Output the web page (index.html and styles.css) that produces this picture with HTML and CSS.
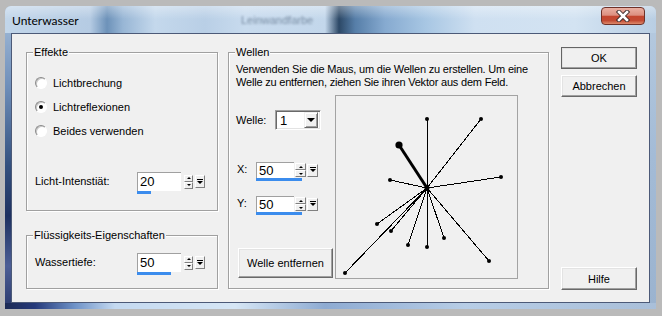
FILE: index.html
```html
<!DOCTYPE html>
<html lang="de">
<head>
    <meta charset="UTF-8">
    <title>Unterwasser</title>
    <link rel="stylesheet" href="styles.css">
</head>
<body>
    <div class="window">
        <div class="titlebar">
            <span class="title">Unterwasser</span>
            <span class="glass-text">Leinwandfarbe</span>
            <button class="close">
                <svg width="16" height="12" viewBox="0 0 16 12">
                    <path d="M4 2 L12 10 M12 2 L4 10" stroke="#3a2a2a" stroke-width="4.4" stroke-linecap="square"/>
                    <path d="M4 2 L12 10 M12 2 L4 10" stroke="#fff" stroke-width="2.6" stroke-linecap="square"/>
                </svg>
            </button>
        </div>

        <div class="client">
            <div class="left-col">
                <div class="group group-effects">
                    <span class="legend">Effekte</span>
                    <div class="radio-row"><span class="radio"></span>Lichtbrechung</div>
                    <div class="radio-row"><span class="radio checked"></span>Lichtreflexionen</div>
                    <div class="radio-row"><span class="radio"></span>Beides verwenden</div>
                    <div class="field-row intensity">
                        <span class="field-label">Licht-Intenstiät:</span>
                        <div class="spin">
                            <div class="spin-row">
                                <div class="spin-edit">20</div>
                                <div class="spin-arrows">
                                    <span class="arrow-btn"><i class="tri-up"></i></span>
                                    <span class="arrow-btn"><i class="tri-down"></i></span>
                                </div>
                                <div class="spin-drop">
                                    <svg width="6" height="6" viewBox="0 0 6 6"><rect x="0" y="0" width="6" height="1" fill="#000"/><path d="M0 2 H6 L3 5 Z" fill="#000"/></svg>
                                </div>
                            </div>
                            <div class="spin-bar" style="width:14px"></div>
                        </div>
                    </div>
                </div>

                <div class="group group-fluid">
                    <span class="legend">Flüssigkeits-Eigenschaften</span>
                    <div class="field-row">
                        <span class="field-label">Wassertiefe:</span>
                        <div class="spin">
                            <div class="spin-row">
                                <div class="spin-edit">50</div>
                                <div class="spin-arrows">
                                    <span class="arrow-btn"><i class="tri-up"></i></span>
                                    <span class="arrow-btn"><i class="tri-down"></i></span>
                                </div>
                                <div class="spin-drop">
                                    <svg width="6" height="6" viewBox="0 0 6 6"><rect x="0" y="0" width="6" height="1" fill="#000"/><path d="M0 2 H6 L3 5 Z" fill="#000"/></svg>
                                </div>
                            </div>
                            <div class="spin-bar" style="width:34px"></div>
                        </div>
                    </div>
                </div>
            </div>

            <div class="group group-waves">
                <span class="legend">Wellen</span>
                <p class="hint">Verwenden Sie die Maus, um die Wellen zu erstellen. Um eine<br>Welle zu entfernen, ziehen Sie ihren Vektor aus dem Feld.</p>
                <div class="wave-body">
                    <div class="wave-controls">
                        <div class="wave-row">
                            <span class="wave-label">Welle:</span>
                            <div class="combo">
                                <span class="combo-value">1</span>
                                <span class="combo-btn"><i class="tri-combo"></i></span>
                            </div>
                        </div>
                        <div class="xy-row first">
                            <span class="xy-label">X:</span>
                            <div class="spin spin-small">
                                <div class="spin-row">
                                    <div class="spin-edit">50</div>
                                    <div class="spin-arrows">
                                        <span class="arrow-btn"><i class="tri-up"></i></span>
                                        <span class="arrow-btn"><i class="tri-down"></i></span>
                                    </div>
                                    <div class="spin-drop">
                                        <svg width="6" height="6" viewBox="0 0 6 6"><rect x="0" y="0" width="6" height="1" fill="#000"/><path d="M0 2 H6 L3 5 Z" fill="#000"/></svg>
                                    </div>
                                </div>
                                <div class="spin-bar" style="width:46px"></div>
                            </div>
                        </div>
                        <div class="xy-row">
                            <span class="xy-label">Y:</span>
                            <div class="spin spin-small">
                                <div class="spin-row">
                                    <div class="spin-edit">50</div>
                                    <div class="spin-arrows">
                                        <span class="arrow-btn"><i class="tri-up"></i></span>
                                        <span class="arrow-btn"><i class="tri-down"></i></span>
                                    </div>
                                    <div class="spin-drop">
                                        <svg width="6" height="6" viewBox="0 0 6 6"><rect x="0" y="0" width="6" height="1" fill="#000"/><path d="M0 2 H6 L3 5 Z" fill="#000"/></svg>
                                    </div>
                                </div>
                                <div class="spin-bar" style="width:46px"></div>
                            </div>
                        </div>
                        <button class="btn btn-remove">Welle entfernen</button>
                    </div>

                    <div class="wave-canvas">
                        <svg width="181" height="182" viewBox="0 0 181 182">
                            <g stroke="#000" stroke-width="1" shape-rendering="crispEdges">
                                <line x1="91" y1="92" x2="91" y2="23"/>
                                <line x1="91" y1="92" x2="145" y2="23"/>
                                <line x1="91" y1="92" x2="54" y2="84"/>
                                <line x1="91" y1="92" x2="165" y2="81"/>
                                <line x1="91" y1="92" x2="41" y2="128"/>
                                <line x1="91" y1="92" x2="55" y2="135"/>
                                <line x1="91" y1="92" x2="72" y2="149"/>
                                <line x1="91" y1="92" x2="91" y2="151"/>
                                <line x1="91" y1="92" x2="108" y2="142"/>
                                <line x1="91" y1="92" x2="153" y2="165"/>
                                <line x1="91" y1="92" x2="9" y2="177"/>
                            </g>
                            <line x1="91" y1="92" x2="63" y2="49" stroke="#000" stroke-width="3"/>
                            <g fill="#000">
                                <circle cx="91" cy="92" r="2.5"/>
                                <circle cx="63" cy="49" r="3.6"/>
                                <circle cx="91" cy="23" r="2"/>
                                <circle cx="145" cy="23" r="2"/>
                                <circle cx="54" cy="84" r="2"/>
                                <circle cx="165" cy="81" r="2"/>
                                <circle cx="41" cy="128" r="2"/>
                                <circle cx="55" cy="135" r="2"/>
                                <circle cx="72" cy="149" r="2"/>
                                <circle cx="91" cy="151" r="2"/>
                                <circle cx="108" cy="142" r="2"/>
                                <circle cx="153" cy="165" r="2"/>
                                <circle cx="9" cy="177" r="2"/>
                            </g>
                        </svg>
                    </div>
                </div>
            </div>

            <div class="button-col">
                <button class="btn btn-default">OK</button>
                <button class="btn btn-cancel">Abbrechen</button>
                <button class="btn btn-help">Hilfe</button>
            </div>
        </div>
    </div>
</body>
</html>
```

FILE: styles.css
```css
body {
    margin: 0;
    background: #bababa;
    font-family: "Liberation Sans", Arial, sans-serif;
    font-size: 11px;
    color: #000;
}
.window {
    margin: 6px 0 0 5px;
    width: 651px;
    height: 303px;
    box-sizing: border-box;
    padding: 0 6px 6px 6px;
    display: flex;
    flex-direction: column;
    border-radius: 6px 6px 0 0;
    background:
        linear-gradient(to right, #1d2b55 0, #25397a 30px, #6f93c8 70px, #c4d9f0 110px, #d6e6f5 230px, #8eabd2 320px, #b7cde6 460px, #a9bfd9 651px) bottom / 100% 6px no-repeat,
        linear-gradient(to bottom, #a9c1dc 0, #6f8fba 80px, #33507e 160px, #1e3160 210px, #4d5f96 260px, #2a396c 303px) left / 6px 100% no-repeat,
        linear-gradient(to bottom, #b7cbe0 0, #a3bbd6 150px, #9bb3cf 303px) right / 6px 100% no-repeat;
}
.titlebar {
    position: relative;
    height: 27px;
    margin: 0 -6px;
    padding: 0 11px 0 7px;
    display: flex;
    align-items: center;
    border-radius: 6px 6px 0 0;
    background:
        linear-gradient(to bottom, rgba(255, 255, 255, 0.35), rgba(255, 255, 255, 0) 13px),
        linear-gradient(to right, #c2d6ea 0, #b5cbe3 85px, #6d92b9 102px, #98b6d5 118px, #c4d8ec 150px, #b9cfe6 200px, #c8dbee 240px, #c3d7eb 320px, #2c4866 334px, #567ea8 350px, #86aad0 380px, #a7c6e3 420px, #cfe0f1 470px, #d3e3f2 570px, #b9cee3 651px);
}
.title {
    font-family: Lato, "Liberation Sans", sans-serif;
    font-size: 12px;
    margin-top: 1px;
}
.glass-text {
    position: absolute;
    left: 236px;
    top: 8px;
    color: #7a8ea4;
    font-size: 11px;
    filter: blur(1px);
}
.close {
    margin-left: auto;
    align-self: flex-start;
    margin-top: 1px;
    width: 44px;
    height: 18px;
    padding: 0;
    border: 1px solid #6e3128;
    border-radius: 4px;
    background: linear-gradient(to bottom, #eab0a2 0, #dc8f80 45%, #c4462f 52%, #c24a33 78%, #de8a6b 100%);
    display: flex;
    align-items: center;
    justify-content: center;
}
.client {
    flex: 1;
    display: flex;
    align-items: flex-start;
    padding: 13px 0 0 14px;
    background: #f0f0f0;
    border: 1px solid #4c5a78;
}
.left-col {
    width: 192px;
    margin-top: 5px;
}
.group {
    position: relative;
    box-sizing: border-box;
    border: 1px solid #a0a0a0;
    box-shadow: inset 1px 1px #fff, 1px 1px #fff;
}
.legend {
    position: absolute;
    top: -8px;
    left: 6px;
    padding: 0 1px;
    line-height: 14px;
    background: #f0f0f0;
}
.group-effects {
    height: 159px;
    padding: 18px 0 0 8px;
}
.group-fluid {
    height: 54px;
    margin-top: 24px;
    padding: 17px 0 0 8px;
}
.radio-row {
    height: 24px;
    display: flex;
    align-items: center;
}
.radio {
    width: 12px;
    height: 12px;
    box-sizing: border-box;
    margin-right: 6px;
    border-radius: 50%;
    border: 1px solid;
    border-color: #8a8a8a #fff #fff #8a8a8a;
    box-shadow: inset 1px 1px #c8c8c8;
    background: #fff;
    position: relative;
}
.radio.checked::after {
    content: "";
    position: absolute;
    left: 3px;
    top: 3px;
    width: 4px;
    height: 4px;
    border-radius: 50%;
    background: #000;
}
.field-row {
    display: flex;
    align-items: flex-start;
}
.intensity {
    margin-top: 29px;
}
.field-label {
    width: 102px;
    line-height: 19px;
}

/* spin controls */
.spin {
    display: flex;
    flex-direction: column;
}
.spin-row {
    display: flex;
    align-items: center;
    height: 19px;
}
.spin-edit {
    width: 44px;
    height: 19px;
    box-sizing: border-box;
    padding-left: 2px;
    background: #fff;
    border-top: 1px solid #a0a0a0;
    border-left: 1px solid #a0a0a0;
    font-size: 13px;
    line-height: 18px;
}
.spin-arrows {
    width: 9px;
    margin-left: 3px;
    display: flex;
    flex-direction: column;
}
.arrow-btn {
    height: 7px;
    box-sizing: border-box;
    border: 1px solid;
    border-color: #fff #808080 #808080 #fff;
    background: #f0f0f0;
    display: flex;
    align-items: center;
    justify-content: center;
}
.tri-up {
    border-left: 2px solid transparent;
    border-right: 2px solid transparent;
    border-bottom: 2px solid #000;
}
.tri-down {
    border-left: 2px solid transparent;
    border-right: 2px solid transparent;
    border-top: 2px solid #000;
}
.spin-drop {
    width: 10px;
    height: 13px;
    margin-left: 2px;
    box-sizing: border-box;
    border: 1px solid;
    border-color: #fff #808080 #808080 #fff;
    background: #f0f0f0;
    display: flex;
    align-items: center;
    justify-content: center;
}
.spin-bar {
    height: 3px;
    background: #3b8ced;
}
.spin-small .spin-row {
    height: 16px;
}
.spin-small .spin-edit {
    width: 38px;
    height: 16px;
    line-height: 15px;
}
.spin-small .spin-arrows {
    width: 11px;
    margin-left: 1px;
}
.spin-small .spin-drop {
    width: 11px;
    height: 13px;
    margin-left: 1px;
}

/* waves */
.group-waves {
    width: 321px;
    height: 237px;
    margin: 5px 0 0 10px;
    padding: 10px 0 0 7px;
}
.hint {
    margin: 0;
    line-height: 13px;
    letter-spacing: -0.2px;
    white-space: nowrap;
}
.wave-body {
    display: flex;
    margin-top: 6px;
}
.wave-controls {
    width: 99px;
}
.wave-row {
    display: flex;
    align-items: center;
    margin-top: 15px;
    height: 20px;
}
.wave-label {
    width: 39px;
}
.combo {
    width: 46px;
    height: 20px;
    box-sizing: border-box;
    display: flex;
    align-items: center;
    border: 1px solid;
    border-color: #a0a0a0 #fff #fff #a0a0a0;
    box-shadow: inset 1px 1px #696969, inset -1px -1px #e3e3e3;
    background: #fff;
}
.combo-value {
    padding-left: 4px;
    font-size: 13px;
}
.combo-btn {
    margin: 0 2px 0 auto;
    width: 14px;
    height: 16px;
    box-sizing: border-box;
    border: 1px solid;
    border-color: #f0f0f0 #696969 #696969 #f0f0f0;
    box-shadow: inset 1px 1px #fff, inset -1px -1px #a0a0a0;
    background: #f0f0f0;
    display: flex;
    align-items: center;
    justify-content: center;
}
.tri-combo {
    border-left: 4px solid transparent;
    border-right: 4px solid transparent;
    border-top: 4px solid #000;
}
.xy-row {
    display: flex;
    align-items: flex-start;
    margin-top: 15px;
}
.xy-row.first {
    margin-top: 32px;
}
.xy-label {
    width: 20px;
    line-height: 14px;
    padding-left: 1px;
    box-sizing: border-box;
}
.wave-canvas {
    width: 183px;
    height: 184px;
    box-sizing: border-box;
    border: 1px solid #a3a3a3;
    background: #f0f0f0;
}
.wave-canvas svg {
    display: block;
}

/* buttons */
.btn {
    font-family: inherit;
    font-size: 11px;
    color: #000;
    padding: 0;
    background: #f0f0f0;
    border: 1px solid;
    border-color: #fff #696969 #696969 #fff;
    box-shadow: inset -1px -1px #a0a0a0, inset 1px 1px #e3e3e3;
}
.btn-remove {
    width: 95px;
    height: 30px;
    margin: 33px 0 0 2px;
}
.button-col {
    width: 76px;
    height: 243px;
    margin-left: 12px;
    display: flex;
    flex-direction: column;
}
.btn-default,
.btn-cancel {
    height: 22px;
}
.btn-default {
    outline: 1px solid #646464;
    outline-offset: -1px;
}
.btn-cancel {
    margin-top: 6px;
}
.btn-help {
    margin-top: auto;
    height: 23px;
}
```
